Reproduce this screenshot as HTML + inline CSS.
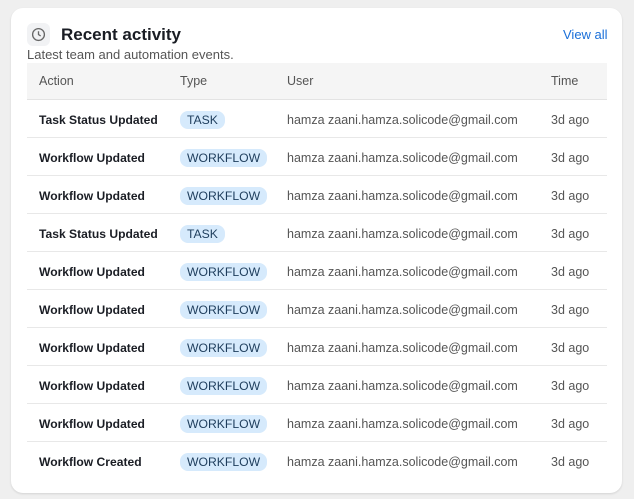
<!DOCTYPE html>
<html><head><style>
body{margin:0;width:634px;height:499px;background:#efefef;font-family:"Liberation Sans",sans-serif;overflow:hidden}
.card{position:absolute;left:11px;top:8px;width:611px;height:485px;background:#fff;border-radius:12px;box-shadow:0 1px 2px rgba(0,0,0,.12)}
.ic{position:absolute;left:16px;top:15px;width:23px;height:23px;background:#f1f2f4;border-radius:6px}
.ic svg{position:absolute;left:4px;top:4px}
.title{position:absolute;left:50px;top:17px;font-size:17px;font-weight:bold;color:#1a1d24}
.sub{position:absolute;left:16px;top:39px;font-size:13px;color:#555}
.va{position:absolute;left:552px;top:19px;font-size:13px;color:#1a6fd8}
table{position:absolute;left:16px;top:55px;width:580px;border-collapse:collapse;font-size:12.5px;table-layout:fixed}
th{background:#f5f5f5;height:36px;box-sizing:border-box;text-align:left;font-weight:normal;color:#555;padding:1px 0 0;border-bottom:1px solid #e3e3e3}
td{height:38px;padding:3px 0 0;border-bottom:1px solid #e8e8e8;color:#555;box-sizing:border-box;white-space:nowrap}
tr:last-child td{border-bottom:none}
td:first-child{font-weight:bold;color:#1a1d24;font-size:12.1px}
th.c1,td.c1{padding-left:12px}
.b{display:inline-block;background:#d6eafc;color:#1e3d5c;border-radius:8px;padding:2px 7px;font-size:12.2px}
</style></head><body>
<div class="card">
<div class="ic"><svg width="15" height="15" viewBox="0 0 16 16" fill="none" stroke="#666" stroke-width="1.4"><circle cx="8" cy="8" r="6.3"/><path d="M8 4.5V8l2.3 1.6"/></svg></div>
<div class="title">Recent activity</div>
<div class="sub">Latest team and automation events.</div>
<div class="va">View all</div>
<table>
<colgroup><col style="width:153px"><col style="width:107px"><col style="width:264px"><col></colgroup>
<tr><th class="c1">Action</th><th>Type</th><th>User</th><th>Time</th></tr>
<tr><td class="c1">Task Status Updated</td><td><span class="b">TASK</span></td><td>hamza zaani.hamza.solicode@gmail.com</td><td>3d ago</td></tr>
<tr><td class="c1">Workflow Updated</td><td><span class="b">WORKFLOW</span></td><td>hamza zaani.hamza.solicode@gmail.com</td><td>3d ago</td></tr>
<tr><td class="c1">Workflow Updated</td><td><span class="b">WORKFLOW</span></td><td>hamza zaani.hamza.solicode@gmail.com</td><td>3d ago</td></tr>
<tr><td class="c1">Task Status Updated</td><td><span class="b">TASK</span></td><td>hamza zaani.hamza.solicode@gmail.com</td><td>3d ago</td></tr>
<tr><td class="c1">Workflow Updated</td><td><span class="b">WORKFLOW</span></td><td>hamza zaani.hamza.solicode@gmail.com</td><td>3d ago</td></tr>
<tr><td class="c1">Workflow Updated</td><td><span class="b">WORKFLOW</span></td><td>hamza zaani.hamza.solicode@gmail.com</td><td>3d ago</td></tr>
<tr><td class="c1">Workflow Updated</td><td><span class="b">WORKFLOW</span></td><td>hamza zaani.hamza.solicode@gmail.com</td><td>3d ago</td></tr>
<tr><td class="c1">Workflow Updated</td><td><span class="b">WORKFLOW</span></td><td>hamza zaani.hamza.solicode@gmail.com</td><td>3d ago</td></tr>
<tr><td class="c1">Workflow Updated</td><td><span class="b">WORKFLOW</span></td><td>hamza zaani.hamza.solicode@gmail.com</td><td>3d ago</td></tr>
<tr><td class="c1">Workflow Created</td><td><span class="b">WORKFLOW</span></td><td>hamza zaani.hamza.solicode@gmail.com</td><td>3d ago</td></tr>
</table>
</div>
</body></html>
